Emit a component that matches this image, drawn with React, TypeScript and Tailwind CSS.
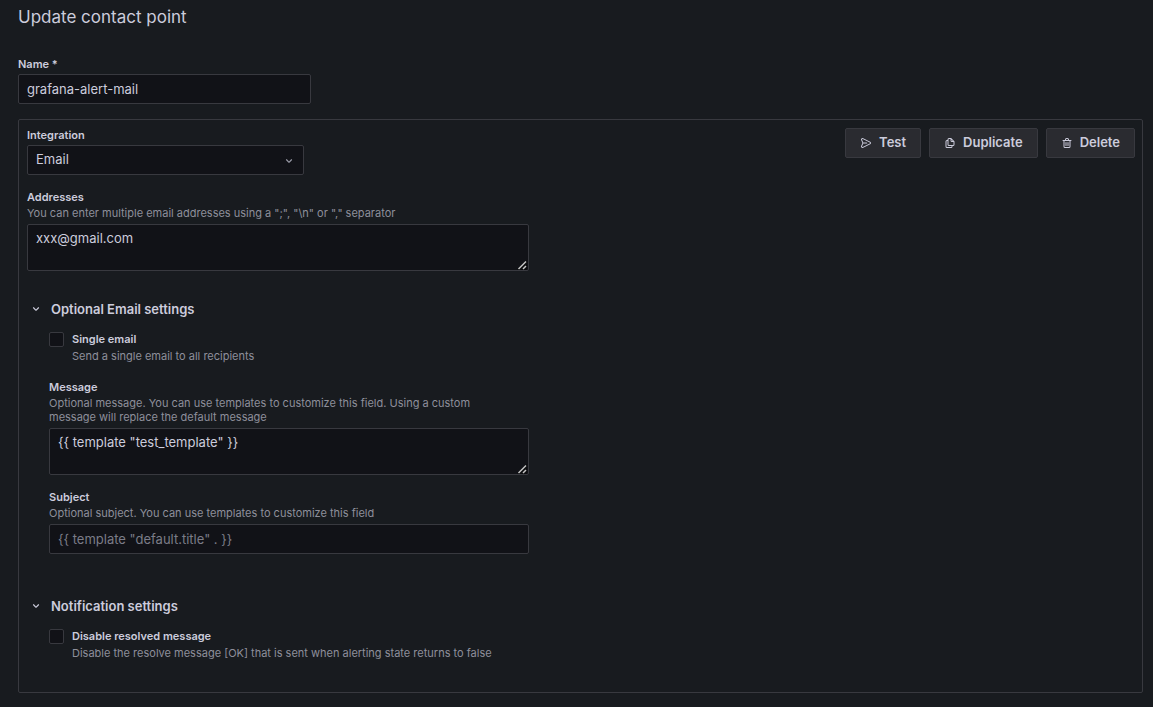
import React, { useState } from 'react';

const icons = {
    angleDown: "M17,9.17a1,1,0,0,0-1.41,0L12,12.71,8.46,9.17a1,1,0,0,0-1.41,0,1,1,0,0,0,0,1.42l4.24,4.24a1,1,0,0,0,1.42,0L17,10.59A1,1,0,0,0,17,9.17Z",
    send: "M20.34,9.32l-14-7a3,3,0,0,0-4.08,3.9l2.4,5.37h0a1.06,1.06,0,0,1,0,.82l-2.4,5.37A3,3,0,0,0,5,22a3.14,3.14,0,0,0,1.35-.32l14-7a3,3,0,0,0,0-5.36Zm-.89,3.57-14,7a1,1,0,0,1-1.35-1.3l2.39-5.37A2,2,0,0,0,6.57,13h6.89a1,1,0,0,0,0-2H6.57a2,2,0,0,0-.08-.22L4.1,5.41a1,1,0,0,1,1.35-1.3l14,7a1,1,0,0,1,0,1.78Z",
    copy: "M21,8.94a1.31,1.31,0,0,0-.06-.27l0-.09a1.07,1.07,0,0,0-.19-.28h0l-6-6h0a1.07,1.07,0,0,0-.28-.19.32.32,0,0,0-.09,0A.88.88,0,0,0,14.05,2H10A3,3,0,0,0,7,5V6H6A3,3,0,0,0,3,9V19a3,3,0,0,0,3,3h8a3,3,0,0,0,3-3V18h1a3,3,0,0,0,3-3V9S21,9,21,8.94ZM15,5.41,17.59,8H16a1,1,0,0,1-1-1ZM15,19a1,1,0,0,1-1,1H6a1,1,0,0,1-1-1V9A1,1,0,0,1,6,8H7v7a3,3,0,0,0,3,3h5Zm4-4a1,1,0,0,1-1,1H10a1,1,0,0,1-1-1V5a1,1,0,0,1,1-1h3V7a3,3,0,0,0,3,3h3Z",
    trash: "M10,18a1,1,0,0,0,1-1V11a1,1,0,0,0-2,0v6A1,1,0,0,0,10,18ZM20,6H16V5a3,3,0,0,0-3-3H11A3,3,0,0,0,8,5V6H4A1,1,0,0,0,4,8H5V19a3,3,0,0,0,3,3h8a3,3,0,0,0,3-3V8h1a1,1,0,0,0,0-2ZM10,5a1,1,0,0,1,1-1h2a1,1,0,0,1,1,1V6H10Zm7,14a1,1,0,0,1-1,1H8a1,1,0,0,1-1-1V8H17Zm-3-1a1,1,0,0,0,1-1V11a1,1,0,0,0-2,0v6A1,1,0,0,0,14,18Z",
};

const inputStyle = "block w-full rounded-xs border border-[#38393f] bg-[#111217] px-2 text-[13px] text-[#ccccdc] placeholder:text-[#7b7c87] focus:outline-none focus:border-[#6e9fff]";

const Icon: React.FC<{ name: keyof typeof icons; className?: string }> = ({ name, className }) => (
    <svg viewBox="0 0 24 24" fill="currentColor" aria-hidden="true" className={className}>
        <path d={icons[name]}/>
    </svg>
);

interface FieldProps {
    id: string;
    label: string;
    description?: string;
    children: React.ReactNode;
}

const Field: React.FC<FieldProps> = ({ id, label, description, children }) => (
    <div>
        <label htmlFor={id} className="block text-[11px] leading-[14px] font-semibold">{label}</label>
        {description && (
            <p className="mt-0.5 pr-4 pb-px text-[11px] leading-[14px] text-[#8e8f9b]">{description}</p>
        )}
        <div className="mt-[3px]">{children}</div>
    </div>
);

interface TextAreaProps {
    id: string;
    value: string;
    onChange: (value: string) => void;
}

const TextArea: React.FC<TextAreaProps> = ({ id, value, onChange }) => (
    <div className="relative">
        <textarea
            id={id}
            value={value}
            onChange={(e) => onChange(e.target.value)}
            className={`${inputStyle} h-[47px] py-[3px] leading-5`}
        />
        <svg
            viewBox="0 0 10 10"
            aria-hidden="true"
            className="pointer-events-none absolute right-0.5 bottom-px size-[10px]"
        >
            <path d="M0 10 10 0V10Z" fill="#0b0c0e"/>
            <path d="M1.5 9 9 1.5M6 9l3-3" stroke="#c4c4c4" strokeWidth="1.5"/>
        </svg>
    </div>
);

const Checkbox: React.FC<{ id: string; label: string; description: string }> = ({ id, label, description }) => {
    const [checked, setChecked] = useState<boolean>(false);

    return (
        <div className="flex items-start gap-2 pb-0.5">
            <input
                id={id}
                type="checkbox"
                checked={checked}
                onChange={() => setChecked(!checked)}
                className="size-[15px] shrink-0 appearance-none rounded-xs border border-[#38393f] bg-[#111217] checked:bg-[#3d71d9]"
            />
            <div className="text-[11px] leading-[14px]">
                <label htmlFor={id} className="block font-semibold">{label}</label>
                <p className="mt-[3px] text-[#8e8f9b]">{description}</p>
            </div>
        </div>
    );
};

const Section: React.FC<{ title: string; children: React.ReactNode }> = ({ title, children }) => {
    const [open, setOpen] = useState<boolean>(true);

    return (
        <section>
            <button
                type="button"
                aria-expanded={open}
                onClick={() => setOpen(!open)}
                className="flex items-center gap-2 pl-0.5 text-[13px] leading-5 font-semibold"
            >
                <Icon name="angleDown" className={open ? "size-[14px]" : "size-[14px] -rotate-90"}/>
                {title}
            </button>
            {open && <div className="mt-[13px] pl-[22px]">{children}</div>}
        </section>
    );
};

const actions: { label: string; icon: keyof typeof icons }[] = [
    { label: "Test", icon: "send" },
    { label: "Duplicate", icon: "copy" },
    { label: "Delete", icon: "trash" },
];

const App: React.FC = () => {
    const [name, setName] = useState<string>('grafana-alert-mail');
    const [addresses, setAddresses] = useState<string>('xxx@gmail.com');
    const [message, setMessage] = useState<string>('{{ template "test_template" }}');
    const [subject, setSubject] = useState<string>('');

    return (
        <main className="min-h-screen bg-[#181b1f] pt-[7px] pr-2.5 pb-3.5 pl-[18px] font-['Inter',sans-serif] text-[#ccccdc] scheme-dark">
            <h1 className="text-[17px] leading-5">Update contact point</h1>
            <form className="mt-[30px]" onSubmit={(e) => e.preventDefault()}>
                <div className="max-w-[293px]">
                    <Field id="name" label="Name *">
                        <input
                            id="name"
                            type="text"
                            value={name}
                            onChange={(e) => setName(e.target.value)}
                            className={`${inputStyle} h-[30px]`}
                        />
                    </Field>
                </div>
                <div className="mt-[15px] rounded-xs border border-[#38393f] pt-2 pr-[7px] pb-[30px] pl-2">
                    <div className="flex items-start justify-between gap-4">
                        <div className="w-[277px]">
                            <Field id="integration" label="Integration">
                                <div className="relative">
                                    <select id="integration" className={`${inputStyle} h-[30px] appearance-none`}>
                                        <option>Email</option>
                                    </select>
                                    <Icon
                                        name="angleDown"
                                        className="pointer-events-none absolute top-[9px] right-2 size-[14px] text-[#9a9ba8]"
                                    />
                                </div>
                            </Field>
                        </div>
                        <div className="flex gap-2">
                            {actions.map(({label, icon}) => (
                                <button
                                    key={label}
                                    type="button"
                                    className="flex h-[30px] items-center gap-[7px] rounded-xs border border-[#38393f] bg-[#2a2b30] px-3.5 text-[13px] font-semibold hover:bg-[#34353b]"
                                >
                                    <Icon name={icon} className="size-3"/>
                                    {label}
                                </button>
                            ))}
                        </div>
                    </div>
                    <div className="mt-[15px] max-w-[502px]">
                        <Field
                            id="addresses"
                            label="Addresses"
                            description={'You can enter multiple email addresses using a ";", "\\n" or "," separator'}
                        >
                            <TextArea id="addresses" value={addresses} onChange={setAddresses}/>
                        </Field>
                    </div>
                    <div className="mt-7 flex max-w-[502px] flex-col gap-[42px]">
                        <Section title="Optional Email settings">
                            <div className="flex flex-col gap-[15px]">
                                <Checkbox
                                    id="single-email"
                                    label="Single email"
                                    description="Send a single email to all recipients"
                                />
                                <Field
                                    id="message"
                                    label="Message"
                                    description="Optional message. You can use templates to customize this field. Using a custom message will replace the default message"
                                >
                                    <TextArea id="message" value={message} onChange={setMessage}/>
                                </Field>
                                <Field
                                    id="subject"
                                    label="Subject"
                                    description="Optional subject. You can use templates to customize this field"
                                >
                                    <input
                                        id="subject"
                                        type="text"
                                        value={subject}
                                        onChange={(e) => setSubject(e.target.value)}
                                        placeholder={'{{ template "default.title" . }}'}
                                        className={`${inputStyle} h-[30px]`}
                                    />
                                </Field>
                            </div>
                        </Section>
                        <Section title="Notification settings">
                            <Checkbox
                                id="disable-resolved"
                                label="Disable resolved message"
                                description="Disable the resolve message [OK] that is sent when alerting state returns to false"
                            />
                        </Section>
                    </div>
                </div>
            </form>
        </main>
    );
};

export default App;
